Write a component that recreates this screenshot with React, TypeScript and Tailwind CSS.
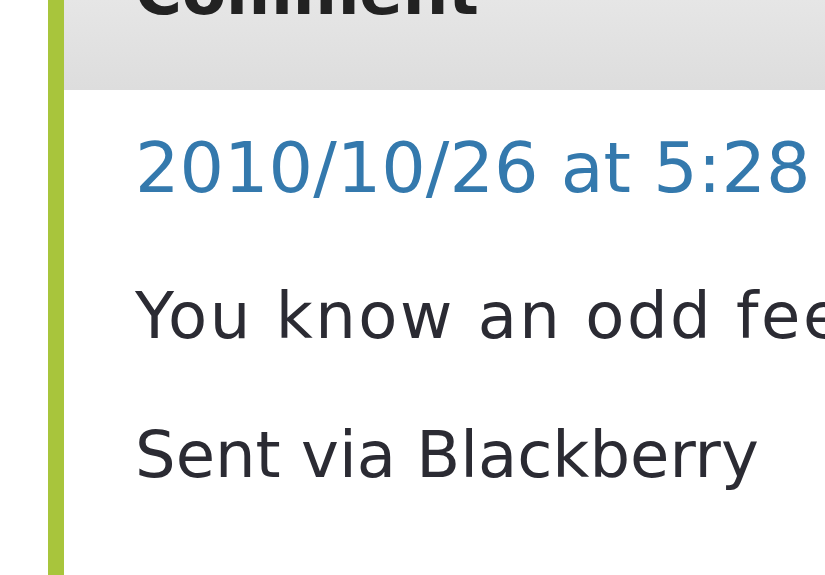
import React from 'react';

export default function App() {
  return (
    <div
      className="w-[825px] h-[575px] overflow-hidden bg-white flex"
      style={{ fontFamily: '"DejaVu Sans", Verdana, sans-serif' }}
    >
      <div className="w-[48px] shrink-0 bg-white" />
      <div className="w-[16px] shrink-0 bg-[#a8c53c]" />
      <div className="flex-1 flex flex-col min-w-0">
        <div className="h-[90px] shrink-0 bg-gradient-to-b from-[#e6e6e6] to-[#dddddd] pl-[71px] overflow-hidden">
          <h2 className="mt-[-40px] text-[64px] leading-none font-bold text-[#222] whitespace-nowrap">
            Comment
          </h2>
        </div>
        <div className="flex-1 bg-white pl-[71px] overflow-hidden whitespace-nowrap">
          <a className="block mt-[43px] text-[70px] leading-none text-[#3479ad]">
            2010/10/26 at 5:28 pm
          </a>
          <p className="mt-[81px] text-[64px] leading-none tracking-[2.5px] text-[#2b2b33]">
            You know an odd feeling
          </p>
          <p className="mt-[75px] text-[64px] leading-none text-[#2b2b33]">
            Sent via Blackberry
          </p>
        </div>
      </div>
    </div>
  );
}
